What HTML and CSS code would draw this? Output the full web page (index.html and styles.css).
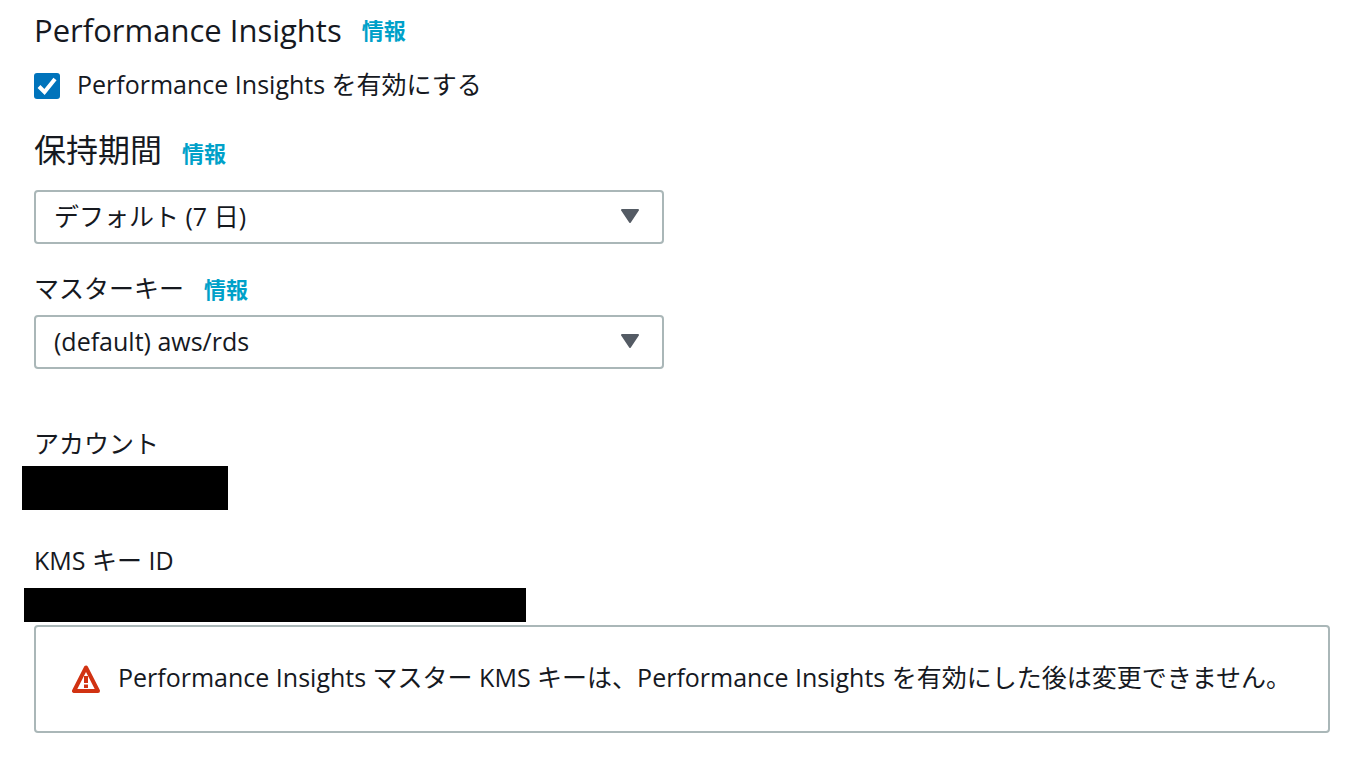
FILE: index.html
```html
<!DOCTYPE html>
<html lang="ja">
<head>
<meta charset="utf-8">
<title>Performance Insights</title>
<link rel="stylesheet" href="styles.css">
</head>
<body>
<main class="panel">
  <header class="heading heading-main">
    <h1 class="title title-main">Performance Insights</h1>
    <a class="info" href="#">情報</a>
  </header>
  <label class="check">
    <input class="check-input" type="checkbox" checked>
    <svg class="check-mark" viewBox="0 0 26 26" aria-hidden="true"><path d="M5 13.5 10.5 19 21 6"/></svg>
    <span class="check-text">Performance Insights を有効にする</span>
  </label>
  <section class="field">
    <div class="heading">
      <label class="title" for="retention">保持期間</label>
      <a class="info" href="#">情報</a>
    </div>
    <div class="select">
      <select class="select-input" id="retention"><option>デフォルト (7 日)</option></select>
      <svg class="arrow" viewBox="0 0 18 14" aria-hidden="true"><path d="M1 1h16L9 13z"/></svg>
    </div>
  </section>
  <section class="field field-key">
    <div class="heading">
      <label for="key">マスターキー</label>
      <a class="info" href="#">情報</a>
    </div>
    <div class="select">
      <select class="select-input" id="key"><option>(default) aws/rds</option></select>
      <svg class="arrow" viewBox="0 0 18 14" aria-hidden="true"><path d="M1 1h16L9 13z"/></svg>
    </div>
  </section>
  <dl class="details">
    <dt class="term">アカウント</dt>
    <dd class="redacted redacted-account"></dd>
    <dt class="term term-key">KMS キー ID</dt>
    <dd class="redacted redacted-key"></dd>
  </dl>
  <div class="alert" role="note">
    <svg class="alert-icon" viewBox="0 0 28 28" aria-hidden="true"><path class="alert-shape" d="M14 2.500 2 26h24z"/><path class="alert-bang" d="M14 11v7m0 1.500v3.500"/></svg>
    <p class="alert-text">Performance Insights マスター KMS キーは、Performance Insights を有効にした後は変更できません。</p>
  </div>
</main>
</body>
</html>
```
FILE: styles.css
```css
* { box-sizing: border-box; }

body {
  margin: 0;
  background: #fff;
  color: #16191f;
  font-family: "Open Sans", "Noto Sans CJK JP", sans-serif;
  font-size: 25px;
  line-height: 36px;
}

.panel { padding: 8px 32px 24px 34px; }

.heading {
  display: flex;
  align-items: baseline;
  gap: 20px;
}

.heading-main { align-items: center; }

.title {
  margin: 0;
  font-size: 32px;
  font-weight: 400;
  line-height: 44px;
}

.title-main { font-size: 31px; }

.info {
  color: #00a1c9;
  font-size: 22px;
  font-weight: 700;
  line-height: 32px;
  text-decoration: none;
}

.check {
  position: relative;
  display: flex;
  align-items: center;
  gap: 17px;
  height: 36px;
  margin-top: 16px;
}

.check-text { padding-bottom: 4px; }

.check-input {
  appearance: none;
  width: 26px;
  height: 26px;
  margin: 0;
  border-radius: 3px;
  background: #0073bb;
}

.check-mark {
  position: absolute;
  left: 0;
  width: 26px;
  height: 26px;
  fill: none;
  stroke: #fff;
  stroke-width: 4;
}

.field { margin-top: 24px; }
.field-key { margin-top: 26px; }

.select {
  position: relative;
  max-width: 630px;
  margin-top: 18px;
}

.field-key .select { margin-top: 9px; }

.select-input {
  appearance: none;
  display: block;
  width: 100%;
  height: 54px;
  padding: 0 18px 3px;
  border: 2px solid #aab7b8;
  border-radius: 4px;
  background: #fff;
  color: inherit;
  font: inherit;
}

.arrow {
  position: absolute;
  top: 19px;
  right: 25px;
  width: 18px;
  height: 14px;
  fill: #545b64;
  stroke: #545b64;
  stroke-width: 2;
  stroke-linejoin: round;
  pointer-events: none;
}

.details { margin: 56px 0 0; }
.term-key { margin-top: 32px; }

.redacted {
  background: #000;
}

.redacted-account {
  width: 206px;
  height: 44px;
  margin: 5px 0 0 -12px;
}

.redacted-key {
  width: 502px;
  height: 34px;
  margin: 10px 0 0 -10px;
}

.alert {
  display: flex;
  align-items: center;
  gap: 18px;
  min-height: 108px;
  margin-top: 3px;
  padding: 16px 36px;
  border: 2px solid #aab7b8;
  border-radius: 4px;
}

.alert-icon {
  flex: none;
  width: 28px;
  height: 28px;
  fill: none;
  stroke: #d13212;
  stroke-width: 4;
  stroke-linejoin: round;
}

.alert-text {
  margin: 0;
  padding-bottom: 4px;
}
```
